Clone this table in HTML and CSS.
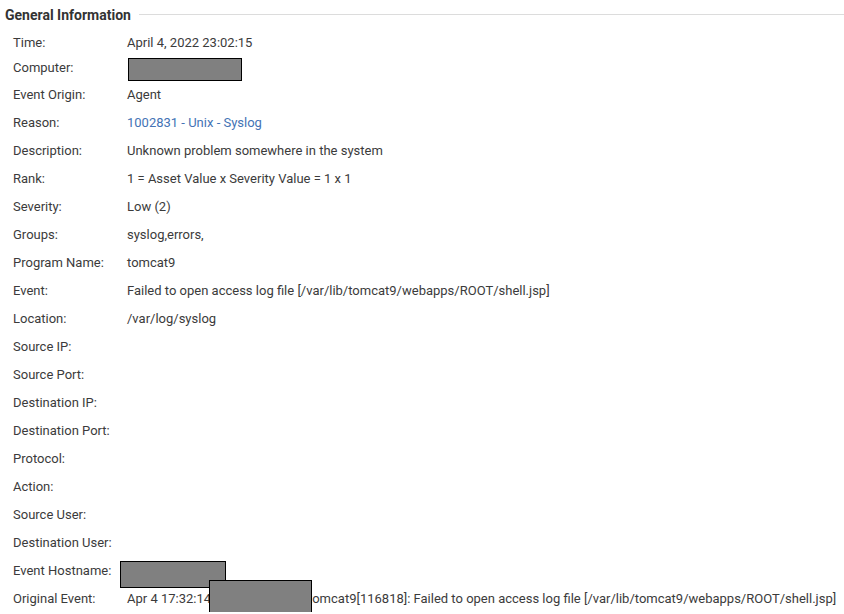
FILE: index.html
```html
<!DOCTYPE html>
<html lang="en">
<head>
  <meta charset="UTF-8">
  <title>Event Details</title>
  <meta name="viewport" content="width=device-width, initial-scale=1.0">
  <link rel="stylesheet" href="styles.css">
</head>
<body>
  <div class="section">
    <div class="section-title">
      <h2>General Information</h2>
      <span class="rule"></span>
    </div>

    <div class="details">
      <div class="row row-time"><span class="label">Time:</span><span class="value">April 4, 2022 23:02:15</span></div>
      <div class="row row-computer"><span class="label">Computer:</span><span class="value"><span class="redact redact-computer"></span></span></div>
      <div class="row"><span class="label">Event Origin:</span><span class="value">Agent</span></div>
      <div class="row"><span class="label">Reason:</span><span class="value"><a href="#">1002831 - Unix - Syslog</a></span></div>
      <div class="row"><span class="label">Description:</span><span class="value">Unknown problem somewhere in the system</span></div>
      <div class="row"><span class="label">Rank:</span><span class="value">1 = Asset Value x Severity Value = 1 x 1</span></div>
      <div class="row"><span class="label">Severity:</span><span class="value">Low (2)</span></div>
      <div class="row"><span class="label">Groups:</span><span class="value">syslog,errors,</span></div>
      <div class="row"><span class="label">Program Name:</span><span class="value">tomcat9</span></div>
      <div class="row"><span class="label">Event:</span><span class="value">Failed to open access log file [/var/lib/tomcat9/webapps/ROOT/shell.jsp]</span></div>
      <div class="row"><span class="label">Location:</span><span class="value">/var/log/syslog</span></div>
      <div class="row"><span class="label">Source IP:</span><span class="value"></span></div>
      <div class="row"><span class="label">Source Port:</span><span class="value"></span></div>
      <div class="row"><span class="label">Destination IP:</span><span class="value"></span></div>
      <div class="row"><span class="label">Destination Port:</span><span class="value"></span></div>
      <div class="row"><span class="label">Protocol:</span><span class="value"></span></div>
      <div class="row"><span class="label">Action:</span><span class="value"></span></div>
      <div class="row"><span class="label">Source User:</span><span class="value"></span></div>
      <div class="row"><span class="label">Destination User:</span><span class="value"></span></div>
      <div class="row"><span class="label">Event Hostname:</span><span class="value"><span class="redact redact-host"></span></span></div>
      <div class="row"><span class="label">Original Event:</span><span class="value">Apr 4 17:32:14<span class="hidden-host"><span class="redact redact-orig"></span></span>tomcat9[116818]: Failed to open access log file [/var/lib/tomcat9/webapps/ROOT/shell.jsp]</span></div>
    </div>
  </div>
</body>
</html>
```

FILE: styles.css
```css
body {
  margin: 0;
  padding: 0;
  background: #fff;
  font-family: Roboto, "Liberation Sans", Arial, sans-serif;
  font-size: 13px;
  color: #3b3b3b;
  overflow: hidden;
}
.section {
  padding: 0 0 0 5px;
}
.section-title {
  display: flex;
  align-items: center;
  height: 29px;
}
.section-title h2 {
  margin: 0;
  font-size: 14px;
  font-weight: bold;
  color: #333;
}
.rule {
  flex: 1;
  margin-left: 8px;
  border-top: 1px solid #dcdcdc;
}
.details {
  padding-left: 8px;
}
.row {
  display: flex;
  align-items: center;
  height: 28px;
  white-space: nowrap;
}
.row-time {
  height: 26px;
}
.row-computer {
  height: 25px;
}
.label {
  width: 114px;
  flex: none;
}
.value {
  position: relative;
}
.value a {
  color: #4473b5;
  text-decoration: none;
}
.redact {
  background: #808080;
  border: 1px solid #000;
  box-sizing: border-box;
}
.redact-computer {
  display: inline-block;
  vertical-align: middle;
  position: relative;
  top: 2px;
  width: 114px;
  height: 23px;
  margin-left: 1px;
}
.redact-host {
  position: absolute;
  left: -7px;
  top: -9px;
  width: 106px;
  height: 27px;
}
.hidden-host {
  position: relative;
  display: inline-block;
  width: 97px;
}
.redact-orig {
  position: absolute;
  left: -2px;
  top: -23px;
  width: 103px;
  height: 36px;
}
```
